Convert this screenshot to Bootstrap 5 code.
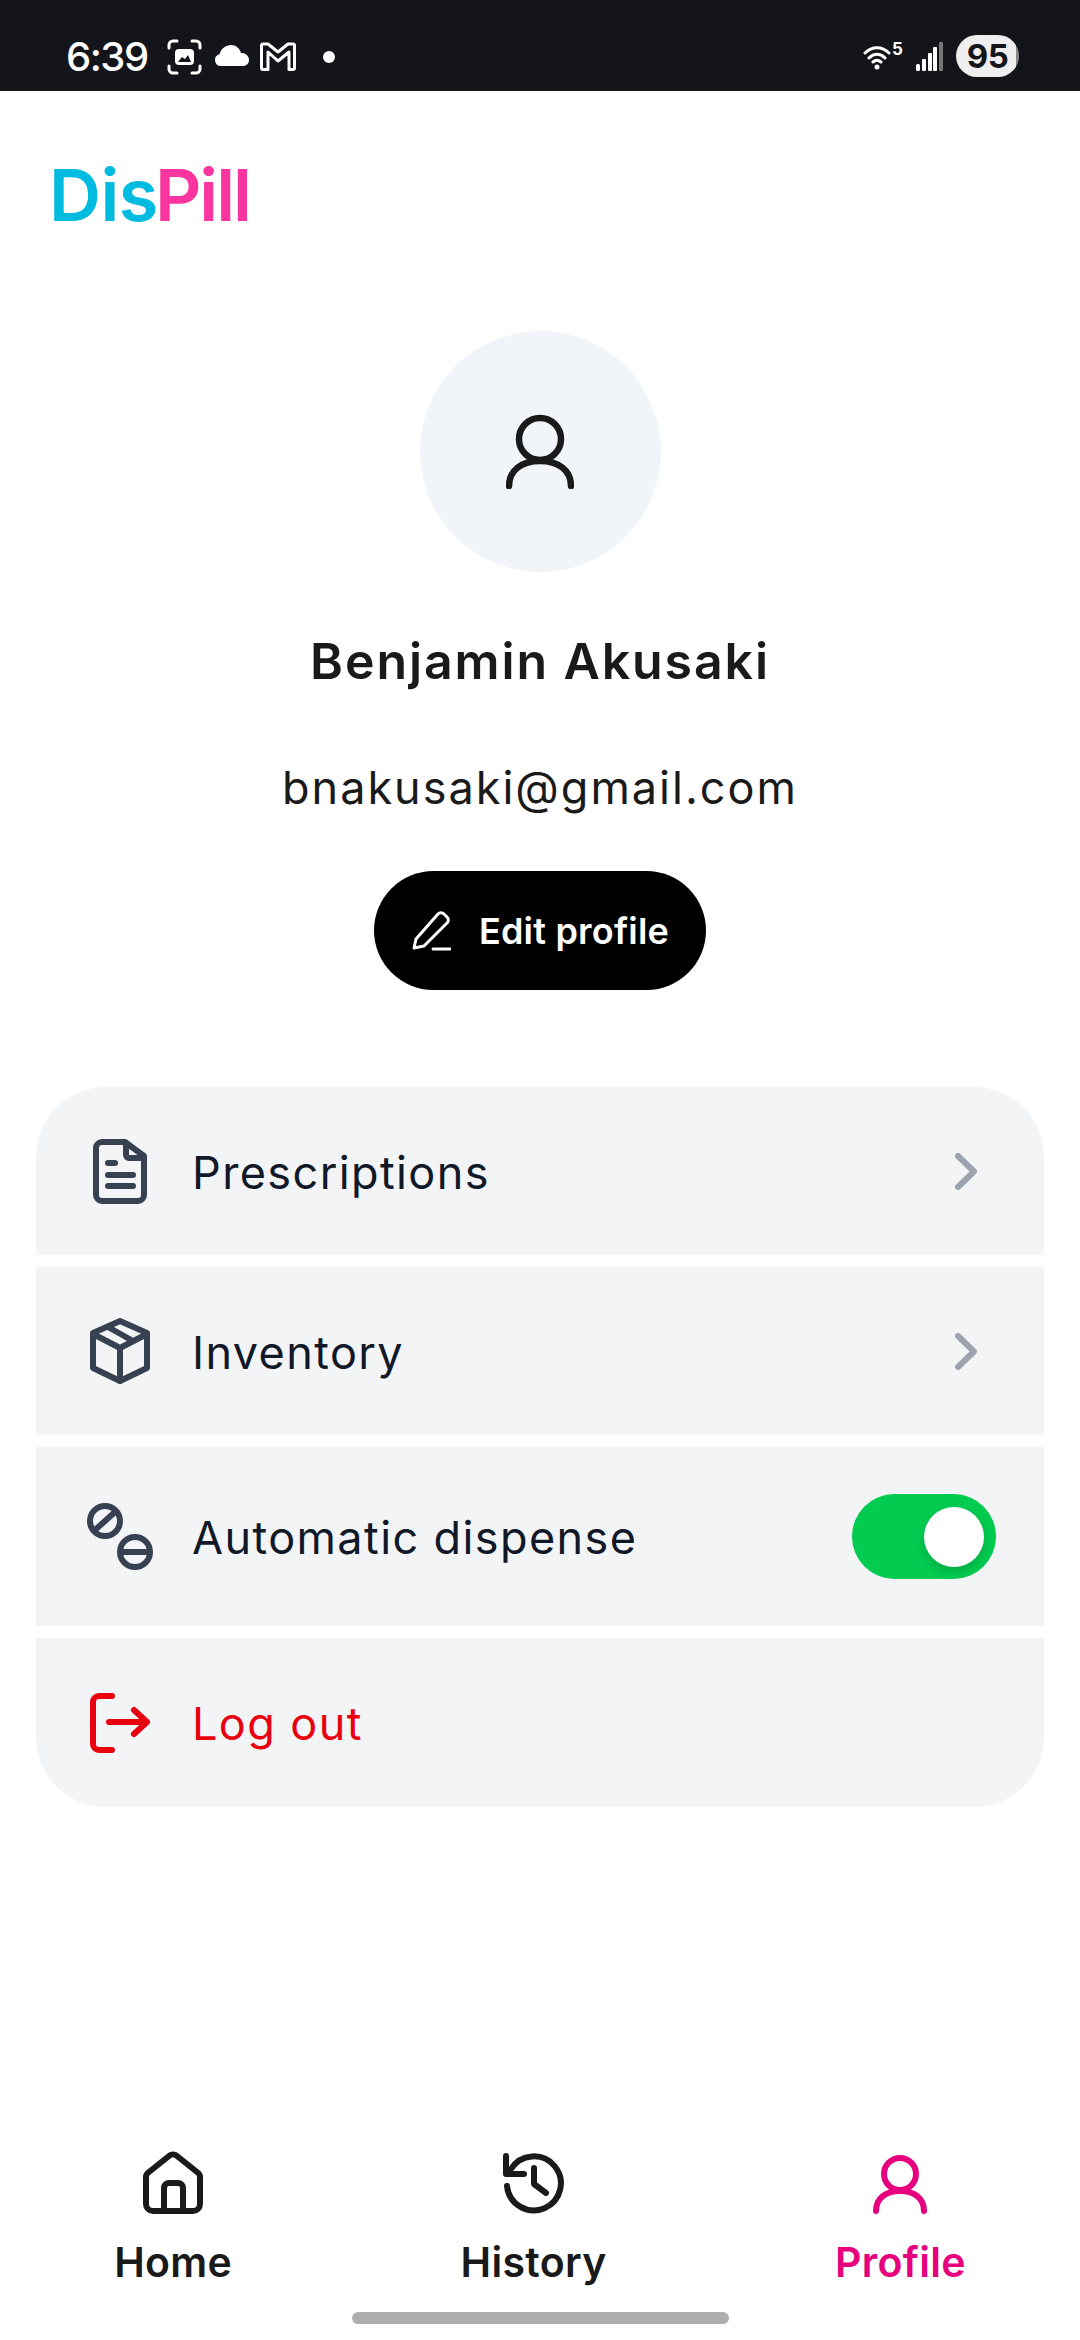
<!DOCTYPE html>
<html lang="en">
<head>
    <meta charset="UTF-8">
    <meta name="viewport" content="width=device-width, initial-scale=1.0">
    <title>Profile</title>
    <link href="https://cdn.jsdelivr.net/npm/bootstrap@5.3.0/dist/css/bootstrap.min.css" rel="stylesheet">
    <style>
        html, body { background: #fff; }
        body { font-family: "Inter", "Liberation Sans", sans-serif; }
        svg { display: block; flex: none; }
        .screen { width: 1080px; height: 2340px; }

        /* status bar */
        .status-bar { height: 91px; background: #14151a; color: #fff; padding: 22px 61px 0 66px; }
        .status-time { font-size: 40px; line-height: 1; font-weight: 500; width: 101px; letter-spacing: -1.5px; }
        .wifi-five { font-size: 17px; line-height: 16px; font-weight: 700; align-self: flex-start; margin: 19px 0 0 1px; width: 10px; }
        .battery-pill { width: 63px; height: 42px; border-radius: 21px; background: linear-gradient(90deg, #eeeeee 95%, #8a8a8a 95%); color: #14151a; font-size: 33px; line-height: 42px; font-weight: 700; text-align: center; margin: -2px 0 0 13px; letter-spacing: -.5px; }
        .gap-cloud { margin: -3px 11px 0 12px; }
        .gap-mail { margin-right: 27px; }
        .gap-signal { margin-left: 14px; }

        /* logo */
        .logo-row { padding: 68px 0 0 49px; height: 240px; font-size: 72px; line-height: 72px; font-weight: 600; letter-spacing: -.5px; }
        .logo-cyan { color: #00bbe0; }
        .logo-pink { color: #fb35a0; margin-left: -3px; letter-spacing: -2px; }

        /* profile */
        .avatar-circle { width: 241px; height: 241px; background: #f1f4f9; }
        .profile-name { font-size: 50px; line-height: 60px; font-weight: 600; color: #1a1a1a; margin: 59px 0 0; letter-spacing: 1.9px; }
        .profile-email { font-size: 45px; line-height: 60px; color: #1a1a1a; margin: 67px 0 0; letter-spacing: 2px; }
        .btn-edit { --bs-btn-bg: #000; --bs-btn-color: #fff; --bs-btn-border-width: 0; --bs-btn-hover-bg: #000; --bs-btn-hover-color: #fff; width: 332px; height: 119px; border-radius: 60px; margin-top: 53px; font-size: 36px; font-weight: 600; gap: 28px; padding: 0; letter-spacing: .2px; }

        /* menu */
        .menu-list { --bs-list-group-border-width: 0; --bs-list-group-bg: #f3f4f6; --bs-list-group-border-radius: 70px; --bs-list-group-color: #111827; margin: 97px 36px 0; gap: 12px; }
        .menu-row { height: 168px; padding: 0 67px 0 0; font-size: 45px; letter-spacing: 1.4px; }
        .menu-row-tall { height: 179px; padding-right: 48px; }
        .menu-row-last { height: 169px; }
        .menu-icon { width: 156px; padding-left: 51px; }
        .menu-label { padding-top: 3px; }
        .icon-shift-6 { margin-left: 6px; }
        .icon-shift-3 { margin-left: 3px; }
        .menu-logout { color: #e8000f; }
        .switch-track { width: 144px; height: 85px; border-radius: 43px; background: #02cb50; padding: 13px 12px; }
        .switch-knob { width: 60px; height: 60px; background: #fff; box-shadow: 0 5px 10px rgba(0,0,0,.15); }

        /* bottom nav */
        .tab-item { color: #1a1a1a; font-size: 41px; line-height: 50px; font-weight: 600; text-decoration: none; gap: 23px; letter-spacing: .3px; }
        .tab-active { color: #e6007e; }
        .tab-bar { margin-bottom: 25px; }
        .home-indicator { width: 377px; height: 12px; background: #aeaeae; margin-bottom: 16px; }
    </style>
</head>
<body>
    <div class="screen d-flex flex-column">
        <!-- status bar -->
        <div class="status-bar d-flex align-items-center">
            <div class="status-time">6:39</div>
            <svg width="35" height="36" viewBox="0 0 35 36" fill="none" stroke="#fff" stroke-width="3" stroke-linecap="round">
                <path d="M2 9V6a4 4 0 0 1 4-4h4M25 2h4a4 4 0 0 1 4 4v3M33 27v3a4 4 0 0 1-4 4h-4M10 34H6a4 4 0 0 1-4-4v-3"/>
                <rect x="8" y="10" width="19" height="16" rx="4" fill="#fff" stroke="none"/>
                <path d="M11 23l4-5 3 2 3-4 3 7z" fill="#14151a" stroke="none"/>
            </svg>
            <svg class="gap-cloud" width="35" height="21" viewBox="0 0 35 21" fill="#fff">
                <path d="M7 21a6 6 0 0 1-1.500-11.800C7 3.500 12 0 17 0c5 0 8.500 3 10 8 4-.5 8 2.500 8 7 0 3.500-2.500 6-6 6z"/>
            </svg>
            <svg class="gap-mail" width="36" height="29" viewBox="0 0 36 29" fill="none" stroke="#fff" stroke-width="3" stroke-linejoin="round">
                <path d="M3 2h5l10 8 10-8h5a1.500 1.500 0 0 1 1.500 1.500V26a1.500 1.500 0 0 1-1.500 1.500h-4V10L18 19 8 10v17.500H3A1.500 1.500 0 0 1 1.500 26V3.500A1.500 1.500 0 0 1 3 2z"/>
            </svg>
            <svg width="12" height="12" viewBox="0 0 12 12" fill="#fff"><circle cx="6" cy="6" r="6"/></svg>

            <svg class="ms-auto" width="28" height="26" viewBox="0 0 28 26" fill="none" stroke="#fff" stroke-width="3" stroke-linecap="round">
                <path d="M2 9C9 2 19 2 26 9M6 14c5-5 11-5 16 0M10 18c3-2.500 5-2.500 8 0"/>
                <circle cx="14" cy="23" r="2.500" fill="#fff" stroke="none"/>
            </svg>
            <span class="wifi-five">5</span>
            <svg class="gap-signal" width="27" height="29" viewBox="0 0 27 29" fill="#fff">
                <rect x="0" y="22" width="4" height="7" rx="1.500"/>
                <rect x="6" y="17" width="4" height="12" rx="1"/>
                <rect x="12" y="11" width="4" height="18" rx="1"/>
                <rect x="17" y="5" width="4" height="24" rx="1"/>
                <rect x="23" y="0" width="4" height="29" rx="1" fill="#777"/>
            </svg>
            <div class="battery-pill">95</div>
        </div>

        <!-- logo -->
        <div class="logo-row"><span class="logo-cyan">Dis</span><span class="logo-pink">Pill</span></div>

        <!-- profile -->
        <div class="d-flex flex-column align-items-center">
            <div class="avatar-circle rounded-circle d-flex align-items-center justify-content-center">
                <svg width="68" height="75" viewBox="0 0 68 75" fill="none" stroke="#1a1a1a" stroke-width="6.500" stroke-linecap="round">
                    <circle cx="34" cy="25" r="21"/>
                    <path d="M3 72C3 56 16 47 34 47C52 47 65 56 65 72"/>
                </svg>
            </div>
            <p class="profile-name">Benjamin Akusaki</p>
            <p class="profile-email">bnakusaki@gmail.com</p>
            <button type="button" class="btn btn-edit d-flex align-items-center justify-content-center">
                <svg width="40" height="41" viewBox="0 0 40 41" fill="none" stroke="#fff" stroke-width="3" stroke-linecap="round" stroke-linejoin="round">
                    <path d="M3 38l2-9L27 4a4 4 0 0 1 6 0l3 3a4 4 0 0 1 0 6L13 36z"/>
                    <path d="M22 39h17"/>
                </svg>
                <span>Edit profile</span>
            </button>
        </div>

        <!-- menu -->
        <div class="list-group menu-list">
            <div class="list-group-item menu-row d-flex align-items-center">
                <div class="menu-icon">
                    <svg class="icon-shift-6" width="54" height="65" viewBox="0 0 54 65" fill="none" stroke="#374151" stroke-width="6" stroke-linecap="round" stroke-linejoin="round">
                        <path d="M9 3h23l19 14v39a6 6 0 0 1-6 6H9a6 6 0 0 1-6-6V9a6 6 0 0 1 6-6z"/>
                        <path d="M33 4v12a3 3 0 0 0 3 3h14"/>
                        <path d="M15 24h7M15 36h25M15 47h25"/>
                    </svg>
                </div>
                <span class="menu-label">Prescriptions</span>
                <svg class="ms-auto" width="22" height="37" viewBox="0 0 22 37" fill="none" stroke="#9ca3af" stroke-width="6" stroke-linecap="round" stroke-linejoin="round">
                    <path d="M3 3l16 15.500L3 34"/>
                </svg>
            </div>
            <div class="list-group-item menu-row d-flex align-items-center">
                <div class="menu-icon">
                    <svg class="icon-shift-3" width="60" height="66" viewBox="0 0 60 66" fill="none" stroke="#374151" stroke-width="6" stroke-linecap="round" stroke-linejoin="round">
                        <path d="M30 3L57 15V50L30 63L3 50V15z"/>
                        <path d="M3 16L30 30L57 16M30 30V63M18 9L43 23"/>
                    </svg>
                </div>
                <span class="menu-label">Inventory</span>
                <svg class="ms-auto" width="22" height="37" viewBox="0 0 22 37" fill="none" stroke="#9ca3af" stroke-width="6" stroke-linecap="round" stroke-linejoin="round">
                    <path d="M3 3l16 15.500L3 34"/>
                </svg>
            </div>
            <div class="list-group-item menu-row menu-row-tall d-flex align-items-center">
                <div class="menu-icon">
                    <svg width="66" height="67" viewBox="0 0 66 67" fill="none" stroke="#374151" stroke-width="6" stroke-linecap="round">
                        <circle cx="18" cy="18" r="15"/>
                        <path d="M8 27L28 9"/>
                        <circle cx="48" cy="49" r="15"/>
                        <path d="M34 49H62"/>
                    </svg>
                </div>
                <span class="menu-label">Automatic dispense</span>
                <div class="switch-track ms-auto d-flex justify-content-end">
                    <div class="switch-knob rounded-circle"></div>
                </div>
            </div>
            <div class="list-group-item menu-row menu-row-last menu-logout d-flex align-items-center">
                <div class="menu-icon">
                    <svg class="icon-shift-3" width="60" height="60" viewBox="0 0 60 60" fill="none" stroke="#e8000f" stroke-width="6" stroke-linecap="round" stroke-linejoin="round">
                        <path d="M22 3H9a6 6 0 0 0-6 6v42a6 6 0 0 0 6 6h13"/>
                        <path d="M19 29H57M44 17l13 12-13 12"/>
                    </svg>
                </div>
                <span class="menu-label">Log out</span>
            </div>
        </div>

        <!-- bottom nav -->
        <div class="tab-bar d-flex justify-content-around align-items-end mt-auto">
            <a class="tab-item d-flex flex-column align-items-center" href="#">
                <svg width="60" height="63" viewBox="0 0 60 63" fill="none" stroke="#1a1a1a" stroke-width="6" stroke-linecap="round" stroke-linejoin="round">
                    <path d="M26 5a6 6 0 0 1 8 0L54 21a6 6 0 0 1 3 5V53a7 7 0 0 1-7 7H10a7 7 0 0 1-7-7V26a6 6 0 0 1 3-5z"/>
                    <path d="M21 60V37a5 5 0 0 1 5-5h9a5 5 0 0 1 5 5V60"/>
                </svg>
                <span>Home</span>
            </a>
            <a class="tab-item d-flex flex-column align-items-center" href="#">
                <svg width="61" height="63" viewBox="0 0 61 63" fill="none" stroke="#1a1a1a" stroke-width="6" stroke-linecap="round" stroke-linejoin="round">
                    <path d="M8 18A27 27 0 1 1 4 35"/>
                    <path d="M3 5V23H21"/>
                    <path d="M31 17V33L43 42"/>
                </svg>
                <span>History</span>
            </a>
            <a class="tab-item tab-active d-flex flex-column align-items-center" href="#">
                <svg width="54" height="60" viewBox="0 0 54 60" fill="none" stroke="#e6007e" stroke-width="6" stroke-linecap="round">
                    <circle cx="27" cy="20" r="16"/>
                    <path d="M3 57C3 44 13 37 27 37C41 37 51 44 51 57"/>
                </svg>
                <span>Profile</span>
            </a>
        </div>
        <div class="home-indicator rounded-pill mx-auto"></div>
    </div>

    <script src="https://cdn.jsdelivr.net/npm/bootstrap@5.3.0/dist/js/bootstrap.bundle.min.js"></script>
</body>
</html>
